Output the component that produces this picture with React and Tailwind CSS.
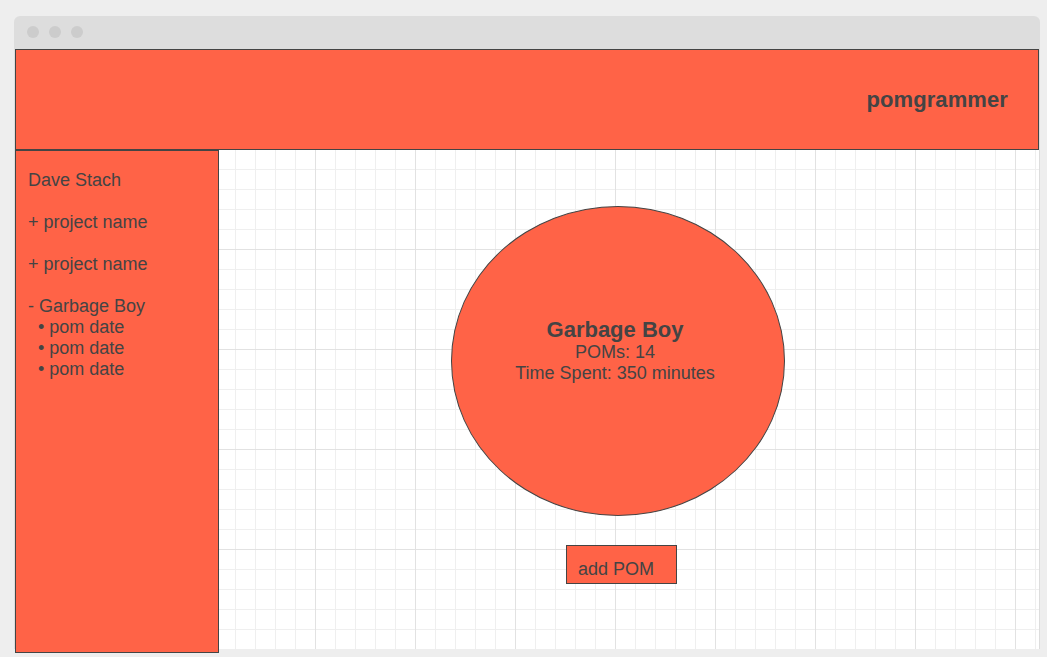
export default function App() {
  return (
    <div className="min-h-[657px] w-[1047px] bg-[#eeeeee] pt-[16px] pl-[14px] font-['Liberation_Sans',Arial,sans-serif] text-[#444444]">
      <div className="w-[1026px] rounded-t-[6px] bg-[#dddddd] px-px">
        {/* title bar */}
        <div className="flex h-[33px] items-center gap-[10px] pl-[12px] pb-px">
          <span className="h-[12px] w-[12px] rounded-full bg-[#cccccc]" />
          <span className="h-[12px] w-[12px] rounded-full bg-[#cccccc]" />
          <span className="h-[12px] w-[12px] rounded-full bg-[#cccccc]" />
        </div>
        {/* body */}
        <div className="relative h-[600px] bg-white [background-image:linear-gradient(to_right,#e2e2e2_1px,transparent_1px),linear-gradient(to_bottom,#e2e2e2_1px,transparent_1px),linear-gradient(to_right,#efefef_1px,transparent_1px),linear-gradient(to_bottom,#efefef_1px,transparent_1px)] [background-size:100px_100px,100px_100px,20px_20px,20px_20px]">
          <header className="flex h-[101px] items-center justify-end border border-[#444444] bg-[#ff6347] pr-[30px]">
            <h1 className="text-[22px] font-bold leading-[25px] tracking-[0.1px]">pomgrammer</h1>
          </header>
          <div className="flex">
            <aside className="h-[503px] w-[204px] shrink-0 border border-[#444444] bg-[#ff6347] px-[12px] pt-[19px] text-[18px] leading-[21px]">
              <div className="flex flex-col gap-[21px]">
                <p>Dave Stach</p>
                <p>+ project name</p>
                <p>+ project name</p>
                <div>
                  <p>- Garbage Boy</p>
                  <ul className="pl-[10px]">
                    <li>• pom date</li>
                    <li>• pom date</li>
                    <li>• pom date</li>
                  </ul>
                </div>
              </div>
            </aside>
            <main className="flex flex-col items-start">
              <div className="ml-[232px] mt-[56px] flex h-[310px] w-[334px] flex-col items-center rounded-[50%] border border-[#444444] bg-[#ff6347] pt-[111px] pr-[6px] text-center">
                <p className="text-[22px] font-bold leading-[24px]">Garbage Boy</p>
                <p className="text-[18px] leading-[21px]">POMs: 14</p>
                <p className="text-[18px] leading-[21px]">Time Spent: 350 minutes</p>
              </div>
              <button className="ml-[347px] mt-[29px] h-[39px] w-[111px] border border-[#444444] bg-[#ff6347] pl-[11px] pt-[9px] text-left align-top text-[18px] leading-[21px] text-[#444444]">
                <span className="block">add POM</span>
              </button>
            </main>
          </div>
        </div>
      </div>
    </div>
  );
}
